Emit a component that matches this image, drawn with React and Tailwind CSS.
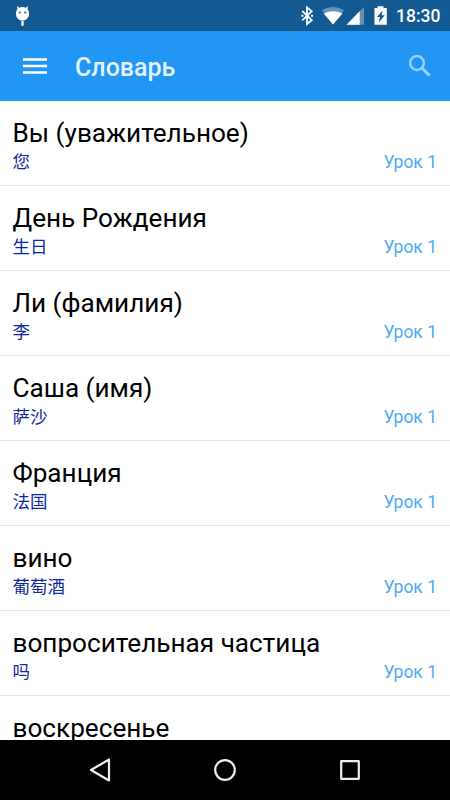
const words = [
  ["Вы (уважительное)", "您"],
  ["День Рождения", "生日"],
  ["Ли (фамилия)", "李"],
  ["Саша (имя)", "萨沙"],
  ["Франция", "法国"],
  ["вино", "葡萄酒"],
  ["вопросительная частица", "吗"],
  ["воскресенье", null],
];

function StatusBar() {
  return (
    <div className="flex h-[31px] shrink-0 items-center bg-[#135a93] pr-[10px] pl-[15px] text-white">
      <svg className="h-[31px] w-4" viewBox="0 0 16 31" fill="currentColor">
        <path d="M2 6 4.2 7.8Q7.5 6.4 10.8 7.8L13 6 12.6 9.2Q14.5 11 14.1 14.4C13.5 18.5 10.5 20.4 7.5 20.4S1.5 18.5.9 14.4Q.5 11 2.4 9.2Z" />
        <path d="M6.4 21h2.2v4.8H6.4z" />
        <path d="M3.8 11.7h2v1.5h-2zM9.2 11.7h2v1.5h-2z" fill="#135a93" />
      </svg>
      <div className="flex-1" />
      <svg className="h-[31px] w-[93px]" viewBox="300 0 93 31" fill="currentColor">
        <path d="m302.3 11 9.4 9.2-4.7 3.8V7.4l4.7 3.8-9.4 9.2" fill="none" stroke="currentColor" strokeWidth="1.8" />
        <path d="M301.4 14.8h2v2h-2zM311 14.8h2v2h-2z" />
        <path d="M322 10.3Q333 3.5 344 10.3L333 24.5Z" opacity=".35" />
        <path d="M323.7 13.4Q333 9.2 342.5 13.4L333 24.5Z" />
        <path d="M346.5 24.8 364 7v17.8Z" opacity=".35" />
        <path d="M346.5 24.8 359.7 11.3v13.5Z" />
        <path d="M374.5 8h3V6.2h6V8h3.3v16.8h-12.3z" />
        <path d="M382.5 10.5 377 17h3l-1.3 5.5 6-7.2h-3.1z" fill="#135a93" />
      </svg>
      <span className="ml-[3px] w-[44px] text-[17.5px] leading-[32px] font-medium whitespace-nowrap">18:30</span>
    </div>
  );
}

function AppBar() {
  return (
    <header className="flex h-[70px] shrink-0 items-center bg-[#2196f3] pr-[19px] pl-[23px]">
      <svg className="h-[18px] w-6" viewBox="0 0 24 18" fill="white">
        <path d="M0 1.2h24v2.6H0zM0 7.7h24v2.6H0zM0 14.2h24v2.6H0z" />
      </svg>
      <h1 className="ml-7 flex-1 pt-[3px] text-[25px] leading-8 font-medium text-[#e2f2fe]">Словарь</h1>
      <svg className="h-[22px] w-[22px]" viewBox="0 0 22 22" fill="none" stroke="#9acffa" strokeWidth="2.5">
        <circle cx="8" cy="8" r="6.9" />
        <path d="m12.8 12.8 7.8 7.8" strokeWidth="3" />
      </svg>
    </header>
  );
}

function WordRow({ word, translation }) {
  return (
    <li className="flex h-[85px] shrink-0 flex-col border-b border-[#e4e4e4] pr-[13px] pl-[12.5px] pt-4">
      <div className="text-[26.15px] leading-8 whitespace-nowrap text-black">{word}</div>
      {translation && (
        <div className="flex justify-between text-[17.5px] leading-[26px]">
          <span className="text-[#0d2a9b]">{translation}</span>
          <span className="text-[#4eabf5]">Урок 1</span>
        </div>
      )}
    </li>
  );
}

function NavigationBar() {
  return (
    <nav className="flex h-[60px] shrink-0 items-center justify-between bg-black px-[88px]">
      <svg className="h-6 w-6" viewBox="0 0 24 24" fill="none" stroke="#eee" strokeWidth="2.2" strokeLinejoin="round">
        <path d="M21 1.5v21L3 12Z" />
      </svg>
      <svg className="h-6 w-6" viewBox="0 0 24 24" fill="none" stroke="#eee" strokeWidth="2.2">
        <circle cx="12" cy="12" r="9.8" />
      </svg>
      <svg className="h-6 w-6" viewBox="0 0 24 24" fill="none" stroke="#eee" strokeWidth="2.2" strokeLinejoin="round">
        <path d="M3.2 3.2h17.6v17.6H3.2Z" />
      </svg>
    </nav>
  );
}

export default function App() {
  return (
    <div className="flex h-[800px] w-[450px] flex-col overflow-hidden bg-white font-[Roboto,'Noto_Sans_CJK_SC',sans-serif]">
      <StatusBar />
      <AppBar />
      <ul className="flex min-h-0 flex-1 flex-col overflow-hidden">
        {words.map(([word, translation]) => (
          <WordRow key={word} word={word} translation={translation} />
        ))}
      </ul>
      <NavigationBar />
    </div>
  );
}
